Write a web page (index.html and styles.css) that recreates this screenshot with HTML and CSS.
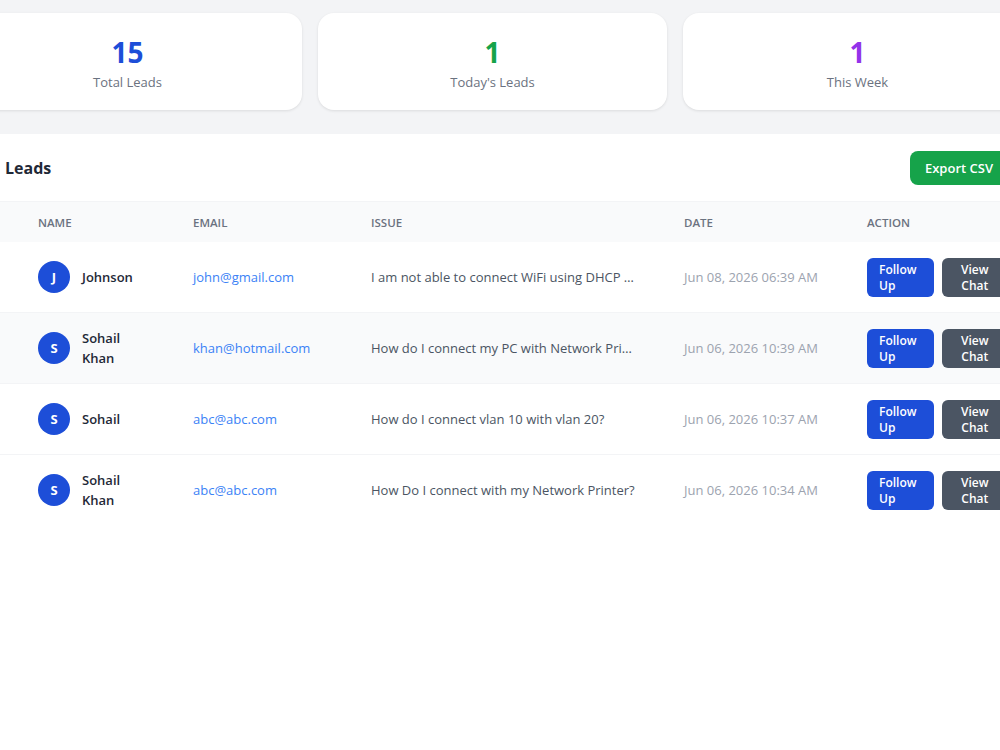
FILE: index.html
```html
<!DOCTYPE html>
<html lang="en">
<head>
    <meta charset="UTF-8">
    <meta name="viewport" content="width=device-width, initial-scale=1.0">
    <title>Leads Dashboard</title>
    <link rel="stylesheet" href="styles.css">
</head>
<body>

    <div class="page">
        <!-- Stats -->
        <div class="stats">
            <div class="stat-card">
                <div class="stat-number blue">15</div>
                <div class="stat-label">Total Leads</div>
            </div>
            <div class="stat-card">
                <div class="stat-number green">1</div>
                <div class="stat-label">Today's Leads</div>
            </div>
            <div class="stat-card">
                <div class="stat-number purple">1</div>
                <div class="stat-label">This Week</div>
            </div>
        </div>

        <!-- Leads table -->
        <div class="panel">
            <div class="panel-header">
                <h2>
                    <svg class="title-icon" width="20" height="20" viewBox="0 0 24 24" fill="none" stroke="#1f2937" stroke-width="2"><path d="M17 21v-2a4 4 0 0 0-4-4H5a4 4 0 0 0-4 4v2"/><circle cx="9" cy="7" r="4"/></svg>
                    Leads
                </h2>
                <button class="export-button">Export CSV</button>
            </div>

            <table class="leads-table">
                <colgroup>
                    <col class="col-num">
                    <col class="col-name">
                    <col class="col-email">
                    <col class="col-issue">
                    <col class="col-date">
                    <col class="col-action">
                </colgroup>
                <thead>
                    <tr>
                        <th>#</th>
                        <th>Name</th>
                        <th>Email</th>
                        <th>Issue</th>
                        <th>Date</th>
                        <th>Action</th>
                    </tr>
                </thead>
                <tbody>
                    <tr>
                        <td class="num">1</td>
                        <td><div class="name-cell"><span class="avatar">J</span><span class="name">Johnson</span></div></td>
                        <td class="email">john@gmail.com</td>
                        <td class="issue">I am not able to connect WiFi using DHCP server on my laptop</td>
                        <td class="date">Jun 08, 2026 06:39 AM</td>
                        <td><div class="actions"><a class="follow-button" href="#">Follow Up</a><button class="chat-button">View Chat</button></div></td>
                    </tr>
                    <tr class="highlight">
                        <td class="num">2</td>
                        <td><div class="name-cell"><span class="avatar">S</span><span class="name">Sohail Khan</span></div></td>
                        <td class="email">khan@hotmail.com</td>
                        <td class="issue">How do I connect my PC with Network Printer in office?</td>
                        <td class="date">Jun 06, 2026 10:39 AM</td>
                        <td><div class="actions"><a class="follow-button" href="#">Follow Up</a><button class="chat-button">View Chat</button></div></td>
                    </tr>
                    <tr>
                        <td class="num">3</td>
                        <td><div class="name-cell"><span class="avatar">S</span><span class="name">Sohail</span></div></td>
                        <td class="email">abc@abc.com</td>
                        <td class="issue">How do I connect vlan 10 with vlan 20?</td>
                        <td class="date">Jun 06, 2026 10:37 AM</td>
                        <td><div class="actions"><a class="follow-button" href="#">Follow Up</a><button class="chat-button">View Chat</button></div></td>
                    </tr>
                    <tr>
                        <td class="num">4</td>
                        <td><div class="name-cell"><span class="avatar">S</span><span class="name">Sohail Khan</span></div></td>
                        <td class="email">abc@abc.com</td>
                        <td class="issue">How Do I connect with my Network Printer?</td>
                        <td class="date">Jun 06, 2026 10:34 AM</td>
                        <td><div class="actions"><a class="follow-button" href="#">Follow Up</a><button class="chat-button">View Chat</button></div></td>
                    </tr>
                </tbody>
            </table>
        </div>
    </div>

</body>
</html>
```

FILE: styles.css
```css
body {
    font-family: "Segoe UI", "Open Sans", "Noto Sans", sans-serif;
    margin: 0;
    background-color: #f3f4f6;
    overflow: hidden;
}
.page {
    width: 1079px;
    margin-left: -47px;
    padding-top: 13px;
}
.stats {
    display: grid;
    grid-template-columns: repeat(3, 1fr);
    gap: 16px;
    margin-bottom: 24px;
}
.stat-card {
    background-color: #fff;
    border-radius: 16px;
    box-shadow: 0 1px 3px rgba(0, 0, 0, 0.1);
    height: 97px;
    display: flex;
    flex-direction: column;
    align-items: center;
    justify-content: center;
    padding-top: 3px;
    box-sizing: border-box;
}
.stat-number {
    font-size: 28px;
    font-weight: 700;
    line-height: 32px;
}
.stat-label {
    font-size: 13px;
    color: #6b7280;
    margin-top: 5px;
}
.blue { color: #1d4ed8; }
.green { color: #16a34a; }
.purple { color: #9333ea; }

.panel {
    background-color: #fff;
    min-height: 620px;
}
.panel-header {
    display: flex;
    justify-content: space-between;
    align-items: center;
    padding: 17px 24px 16px;
    border-bottom: 1px solid #f3f4f6;
}
.panel-header h2 {
    margin: 0;
    font-size: 16px;
    font-weight: 700;
    color: #1f2937;
    display: flex;
    align-items: center;
    gap: 8px;
}
.export-button {
    font-family: inherit;
    font-size: 13px;
    font-weight: 600;
    color: #fff;
    background-color: #16a34a;
    border: none;
    border-radius: 8px;
    height: 34px;
    padding: 0 15px;
}
.leads-table {
    width: 100%;
    table-layout: fixed;
    border-collapse: collapse;
}
.col-num { width: 61px; }
.col-name { width: 155px; }
.col-email { width: 178px; }
.col-issue { width: 313px; }
.col-date { width: 183px; }
.col-action { width: 189px; }
.leads-table th {
    background-color: #f9fafb;
    text-align: left;
    font-size: 11.5px;
    font-weight: 600;
    color: #6b7280;
    text-transform: uppercase;
    height: 40px;
    padding: 0 24px;
}
.leads-table td {
    padding: 0 24px;
    height: 70px;
    font-size: 13px;
    border-bottom: 1px solid #f3f4f6;
}
.leads-table tbody tr:last-child td {
    border-bottom: none;
}
.leads-table tr.highlight td {
    background-color: #f9fafb;
}
.num {
    color: #9ca3af;
}
.name-cell {
    display: flex;
    align-items: center;
    gap: 12px;
}
.avatar {
    flex: none;
    width: 32px;
    height: 32px;
    border-radius: 50%;
    background-color: #1d4ed8;
    color: #fff;
    font-size: 13px;
    font-weight: 700;
    display: flex;
    align-items: center;
    justify-content: center;
}
.name {
    font-weight: 600;
    color: #1f2937;
    line-height: 20px;
}
.email {
    color: #3b82f6;
}
.issue {
    color: #4b5563;
    white-space: nowrap;
    overflow: hidden;
    text-overflow: ellipsis;
}
.date {
    color: #9ca3af;
    white-space: nowrap;
}
.actions {
    display: flex;
    gap: 8px;
}
.follow-button, .chat-button {
    font-family: inherit;
    width: 67px;
    height: 39px;
    box-sizing: border-box;
    padding: 4px 12px;
    font-size: 12px;
    font-weight: 600;
    line-height: 16px;
    color: #fff;
    border: none;
    border-radius: 6px;
}
.follow-button {
    background-color: #1d4ed8;
    text-decoration: none;
    display: block;
}
.chat-button {
    background-color: #4b5563;
}
```
